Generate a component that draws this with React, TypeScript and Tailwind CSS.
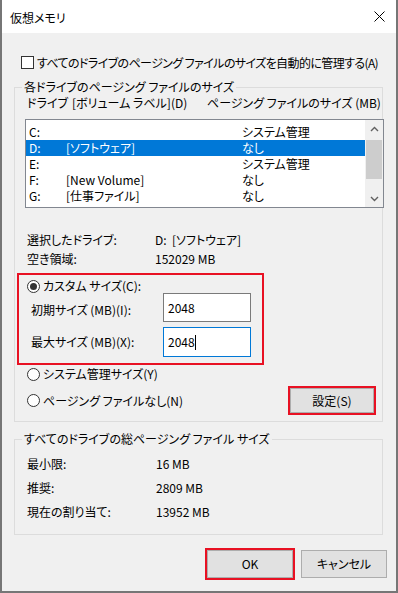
import React from 'react';

const drives = [
  { id: 'C:', label: '', size: 'システム管理' },
  { id: 'D:', label: '[ソフトウェア]', size: 'なし', selected: true },
  { id: 'E:', label: '', size: 'システム管理' },
  { id: 'F:', label: '[New Volume]', size: 'なし' },
  { id: 'G:', label: '[仕事ファイル]', size: 'なし' },
];

const Radio = ({ checked }: { checked?: boolean }) => (
  <span className="w-[13px] h-[13px] rounded-full border border-[#333] bg-white flex items-center justify-center shrink-0">
    {checked && <span className="w-[7px] h-[7px] rounded-full bg-[#333]" />}
  </span>
);

const Chevron = ({ down }: { down?: boolean }) => (
  <svg width="9" height="6" viewBox="0 0 9 6">
    <path
      d={down ? 'M1 1L4.5 4.5L8 1' : 'M1 5L4.5 1.5L8 5'}
      fill="none"
      stroke="#606060"
      strokeWidth="1.4"
    />
  </svg>
);

export default function App() {
  return (
    <div className="w-[398px] h-[593px] flex flex-col bg-[#f0f0f0] border-x-2 border-b-2 border-[#767676] overflow-hidden text-[12px] text-black [font-family:'Noto_Sans_CJK_JP','Noto_Sans',sans-serif] [font-feature-settings:'palt'] leading-none whitespace-nowrap">
      {/* Title bar */}
      <div className="h-[33px] shrink-0 bg-white flex items-center justify-between pl-[8px] pr-[11px]">
        <span className="pt-[3px]">仮想メモリ</span>
        <svg width="11" height="11" viewBox="0 0 11 11">
          <path d="M0.5 0.5L10.5 10.5M10.5 0.5L0.5 10.5" stroke="#000" strokeWidth="1" />
        </svg>
      </div>

      {/* Auto manage */}
      <div className="mt-[23px] ml-[19px] h-[13px] flex items-center gap-[3px]">
        <span className="w-[13px] h-[13px] border border-[#333] bg-white shrink-0" />
        <span className="tracking-[-0.6px]">すべてのドライブのページング ファイルのサイズを自動的に管理する(A)</span>
      </div>

      {/* Per-drive group */}
      <fieldset className="mt-[11px] ml-[12px] w-[369px] border border-[#dcdcdc] min-w-0">
        <legend className="ml-[7px] px-[2px] h-[14px] leading-[14px]">各ドライブのページング ファイルのサイズ</legend>
        <div className="pl-[10px] pb-[6px]">
          <div className="mt-[2px] h-[14px] flex items-center pl-[2px]">
            <span className="w-[45px]">ドライブ</span>
            <span className="w-[135px]">[ボリューム ラベル](D)</span>
            <span>ページング ファイルのサイズ (MB)</span>
          </div>

          <div className="mt-[9px] w-[359px] h-[89px] border border-[#828790] bg-white flex overflow-hidden">
            <div className="flex-1 pt-[4px]">
              {drives.map((d) => (
                <div
                  key={d.id}
                  className={`h-[16px] flex items-center pl-[3px] ${d.selected ? 'bg-[#0078d7] text-white' : ''}`}
                >
                  <span className="w-[37px]">{d.id}</span>
                  <span className="w-[176px]">{d.label}</span>
                  <span>{d.size}</span>
                </div>
              ))}
            </div>
            <div className="w-[18px] bg-[#f0f0f0] flex flex-col">
              <div className="h-[17px] flex items-center justify-center">
                <Chevron />
              </div>
              <div className="mt-[3px] mx-[1px] h-[39px] bg-[#cdcdcd]" />
              <div className="flex-1" />
              <div className="h-[17px] flex items-center justify-center">
                <Chevron down />
              </div>
            </div>
          </div>

          <div className="mt-[22px] pl-[2px]">
            <div className="h-[19px] flex items-center">
              <span className="w-[128px]">選択したドライブ:</span>
              <span>D:&nbsp;&nbsp;[ソフトウェア]</span>
            </div>
            <div className="h-[19px] flex items-center">
              <span className="w-[128px]">空き領域:</span>
              <span>152029 MB</span>
            </div>
          </div>

          {/* Custom size (highlighted) */}
          <div className="mt-[5px] ml-[-8px] w-[247px] h-[92px] border-2 border-[#e81123]">
            <div className="mt-[4px] h-[14px] pl-[8px] flex items-center gap-[3px]">
              <Radio checked />
              <span>カスタム サイズ(C):</span>
            </div>
            <div className="h-[29px] pl-[12px] flex items-center">
              <span className="w-[132px] pt-[4px]">初期サイズ (MB)(I):</span>
              <div className="w-[88px] h-[29px] bg-white border border-[#7a7a7a] flex items-center pl-[4px]">
                2048
              </div>
            </div>
            <div className="mt-[5px] h-[30px] pl-[12px] flex items-center">
              <span className="w-[132px]">最大サイズ (MB)(X):</span>
              <div className="w-[88px] h-[30px] bg-white border border-[#0078d7] flex items-center pl-[4px]">
                <span>2048</span>
                <span className="w-px h-[15px] bg-black" />
              </div>
            </div>
          </div>

          <div className="mt-[2px] h-[14px] pl-[2px] flex items-center gap-[3px]">
            <Radio />
            <span>システム管理サイズ(Y)</span>
          </div>

          <div className="mt-[5px] h-[29px] pr-[6px] flex items-center justify-between">
            <div className="pl-[2px] flex items-center gap-[3px]">
              <Radio />
              <span>ページング ファイルなし(N)</span>
            </div>
            <div className="w-[88px] h-[29px] border-2 border-[#e81123]">
              <div className="w-full h-full bg-[#e1e1e1] border border-[#adadad] flex items-center justify-center">
                設定(S)
              </div>
            </div>
          </div>
        </div>
      </fieldset>

      {/* Totals group */}
      <fieldset className="mt-[10px] ml-[12px] w-[369px] border border-[#dcdcdc] min-w-0">
        <legend className="ml-[7px] px-[2px] h-[14px] leading-[14px]">すべてのドライブの総ページング ファイル サイズ</legend>
        <div className="mt-[6px] pl-[12px] pb-[10px]">
          <div className="h-[24px] flex items-center">
            <span className="w-[129px]">最小限:</span>
            <span>16 MB</span>
          </div>
          <div className="h-[24px] flex items-center">
            <span className="w-[129px]">推奨:</span>
            <span>2809 MB</span>
          </div>
          <div className="h-[24px] flex items-center">
            <span className="w-[129px]">現在の割り当て:</span>
            <span>13952 MB</span>
          </div>
        </div>
      </fieldset>

      {/* Dialog buttons */}
      <div className="mt-[13px] pr-[9px] flex justify-end items-center gap-[6px]">
        <div className="w-[90px] h-[32px] border-2 border-[#e81123]">
          <div className="w-full h-full bg-[#e1e1e1] border border-[#adadad] flex items-center justify-center">
            OK
          </div>
        </div>
        <div className="w-[86px] h-[28px] bg-[#e1e1e1] border border-[#adadad] flex items-center justify-center">
          キャンセル
        </div>
      </div>
    </div>
  );
}
